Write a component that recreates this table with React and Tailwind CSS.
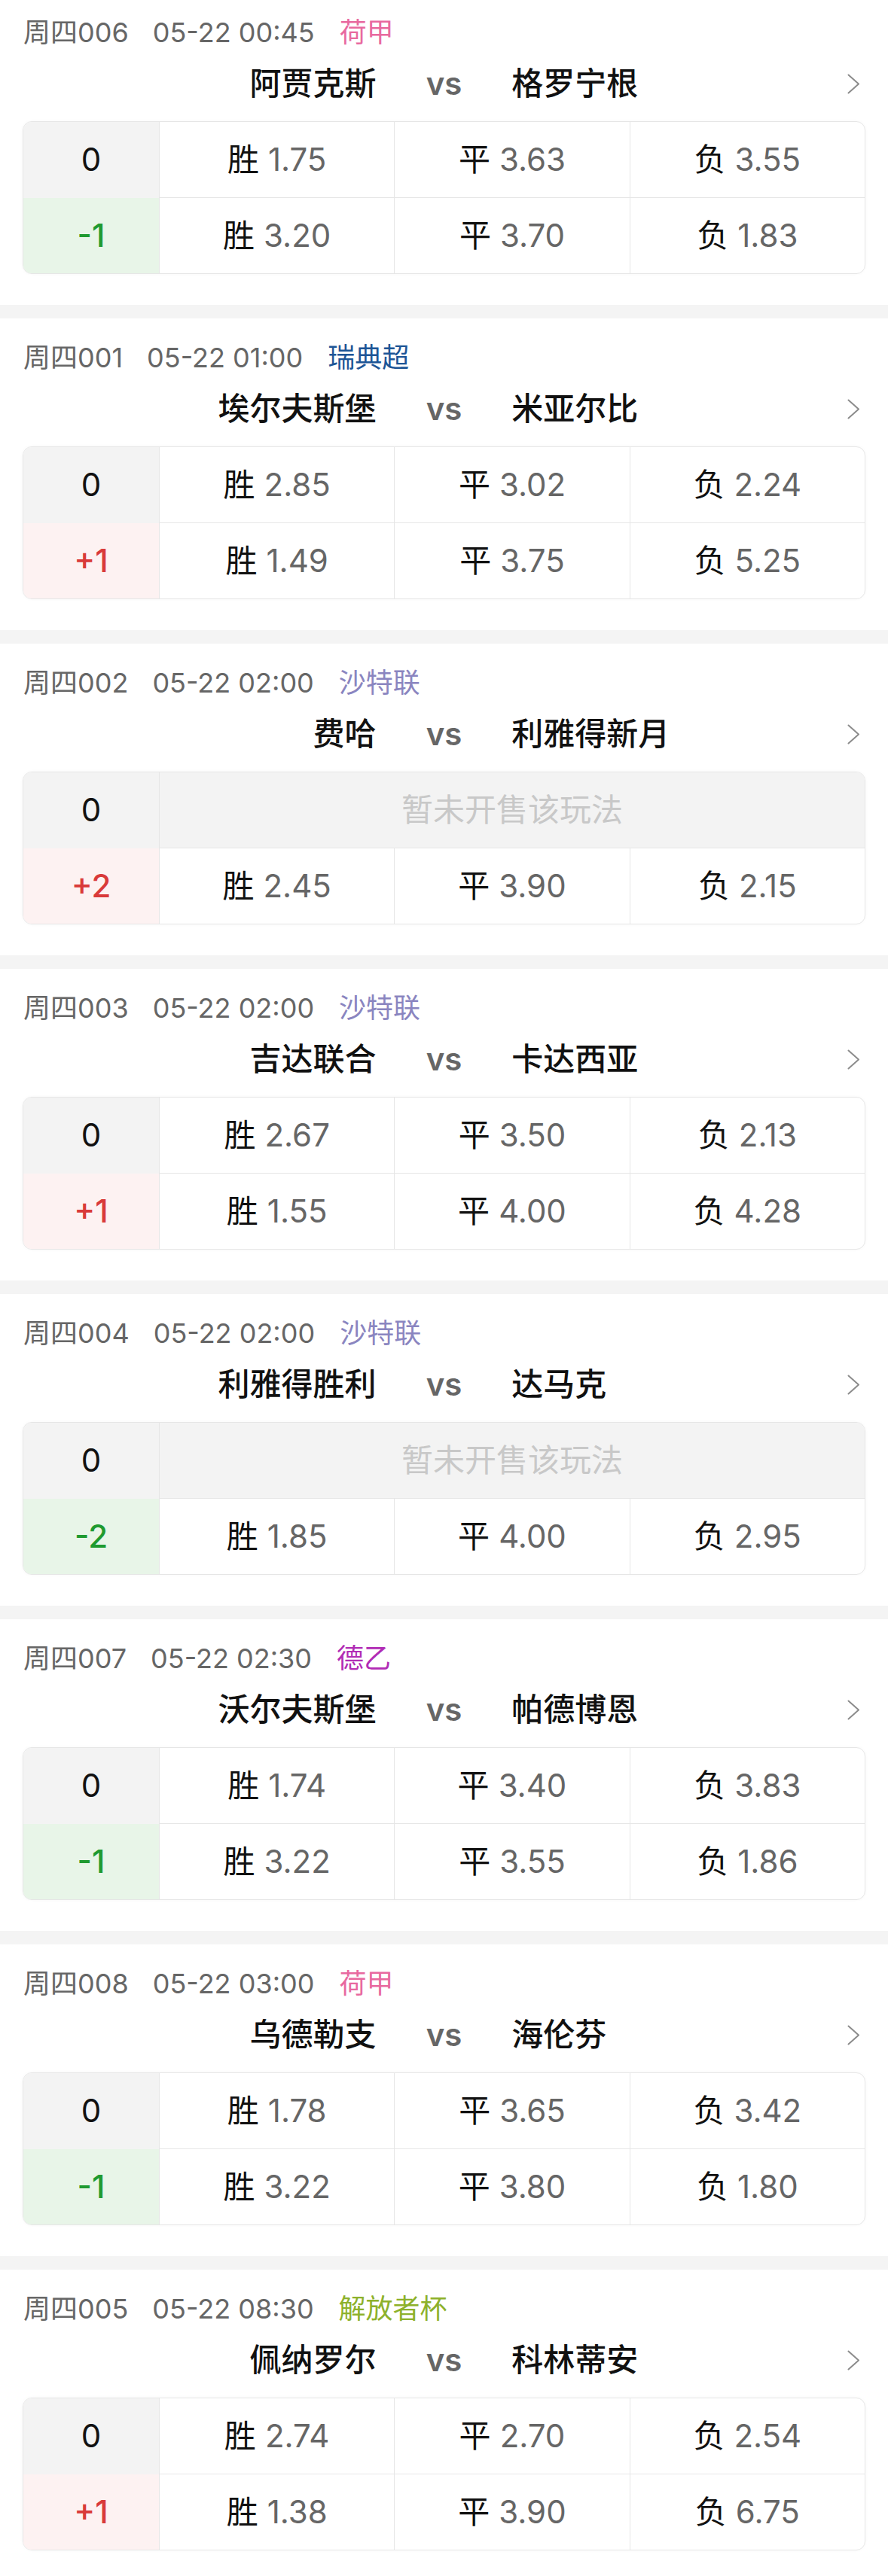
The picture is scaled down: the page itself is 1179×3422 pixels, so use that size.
import React from "react";

const matches = [
  { no: "周四006", time: "05-22 00:45", league: "荷甲", leagueColor: "text-[#e8699f]", home: "阿贾克斯", away: "格罗宁根", odds: ["1.75", "3.63", "3.55"], hc: "-1", hcOdds: ["3.20", "3.70", "1.83"] },
  { no: "周四001", time: "05-22 01:00", league: "瑞典超", leagueColor: "text-[#1d5596]", home: "埃尔夫斯堡", away: "米亚尔比", odds: ["2.85", "3.02", "2.24"], hc: "+1", hcOdds: ["1.49", "3.75", "5.25"] },
  { no: "周四002", time: "05-22 02:00", league: "沙特联", leagueColor: "text-[#8a85c0]", home: "费哈", away: "利雅得新月", odds: null, hc: "+2", hcOdds: ["2.45", "3.90", "2.15"] },
  { no: "周四003", time: "05-22 02:00", league: "沙特联", leagueColor: "text-[#8a85c0]", home: "吉达联合", away: "卡达西亚", odds: ["2.67", "3.50", "2.13"], hc: "+1", hcOdds: ["1.55", "4.00", "4.28"] },
  { no: "周四004", time: "05-22 02:00", league: "沙特联", leagueColor: "text-[#8a85c0]", home: "利雅得胜利", away: "达马克", odds: null, hc: "-2", hcOdds: ["1.85", "4.00", "2.95"] },
  { no: "周四007", time: "05-22 02:30", league: "德乙", leagueColor: "text-[#b12cb5]", home: "沃尔夫斯堡", away: "帕德博恩", odds: ["1.74", "3.40", "3.83"], hc: "-1", hcOdds: ["3.22", "3.55", "1.86"] },
  { no: "周四008", time: "05-22 03:00", league: "荷甲", leagueColor: "text-[#e8699f]", home: "乌德勒支", away: "海伦芬", odds: ["1.78", "3.65", "3.42"], hc: "-1", hcOdds: ["3.22", "3.80", "1.80"] },
  { no: "周四005", time: "05-22 08:30", league: "解放者杯", leagueColor: "text-[#8db12b]", home: "佩纳罗尔", away: "科林蒂安", odds: ["2.74", "2.70", "2.54"], hc: "+1", hcOdds: ["1.38", "3.90", "6.75"] },
];

const labels = ["胜", "平", "负"];

const Chevron = () => (
  <svg width="17" height="27" viewBox="0 0 17 27" fill="none">
    <polyline points="1.5,1.5 15,13.5 1.5,25.5" stroke="#8c8c8c" strokeWidth="2" strokeLinecap="round" strokeLinejoin="round" />
  </svg>
);

const OddsCells = ({ odds }) => (
  <div className="flex flex-1">
    {odds.map((o, i) => (
      <div
        key={i}
        className={`flex-1 flex items-center justify-center ${i < 2 ? "border-r border-[#e6e6e6]" : ""}`}
      >
        <span className="text-[#111]">{labels[i]}</span>
        <span className="ml-[12px] text-[#666]">{o}</span>
      </div>
    ))}
  </div>
);

const MatchCard = ({ m, first }) => {
  const negative = m.hc.startsWith("-");
  return (
    <div className={`bg-white ${first ? "-mt-[9px]" : ""}`}>
      <div className="h-[414px] pt-[32px]">
        {/* header */}
        <div className="flex items-center h-[40px] pl-[31px] text-[36px] text-[#666]">
          <span>{m.no}</span>
          <span className="ml-[32px]">{m.time}</span>
          <span className={`ml-[33px] ${m.leagueColor}`}>{m.league}</span>
        </div>

        {/* teams */}
        <div className="grid grid-cols-[1fr_auto_1fr] items-center h-[44px] mt-[26px] text-[42px]">
          <div className="text-right pr-[66px] font-medium text-[#111]">{m.home}</div>
          <div className="font-semibold text-[#666]">vs</div>
          <div className="flex items-center justify-between pl-[66px] pr-[37px]">
            <span className="font-medium text-[#111]">{m.away}</span>
            <Chevron />
          </div>
        </div>

        {/* odds table */}
        <div className="mx-[30px] mt-[28px] h-[203px] flex rounded-[12px] border border-[#e6e6e6] overflow-hidden text-[42px] shadow-[0_0_4px_rgba(0,0,0,0.03)]">
          <div className="w-[181px] flex flex-col border-r border-[#e6e6e6]">
            <div className="flex-1 flex items-center justify-center bg-[#f3f3f3] text-[#111]">0</div>
            <div
              className={`flex-1 flex items-center justify-center font-medium ${
                negative ? "bg-[#e8f5e8] text-[#1f9a30]" : "bg-[#fdf2f2] text-[#d93a3a]"
              }`}
            >
              {m.hc}
            </div>
          </div>
          <div className="flex-1 flex flex-col">
            <div className="flex-1 flex border-b border-[#e6e6e6]">
              {m.odds ? (
                <OddsCells odds={m.odds} />
              ) : (
                <div className="flex-1 flex items-center justify-center bg-[#f3f3f3] text-[#c8c8c8]">
                  暂未开售该玩法
                </div>
              )}
            </div>
            <div className="flex-1 flex">
              <OddsCells odds={m.hcOdds} />
            </div>
          </div>
        </div>
      </div>
      <div className="h-[18px] bg-[#f4f4f4]" />
    </div>
  );
};

export default function App() {
  return (
    <div
      className="w-[1179px] bg-white leading-none"
      style={{ fontFamily: 'Inter, "Noto Sans CJK SC", sans-serif' }}
    >
      {matches.map((m, i) => (
        <MatchCard key={i} m={m} first={i === 0} />
      ))}
    </div>
  );
}
